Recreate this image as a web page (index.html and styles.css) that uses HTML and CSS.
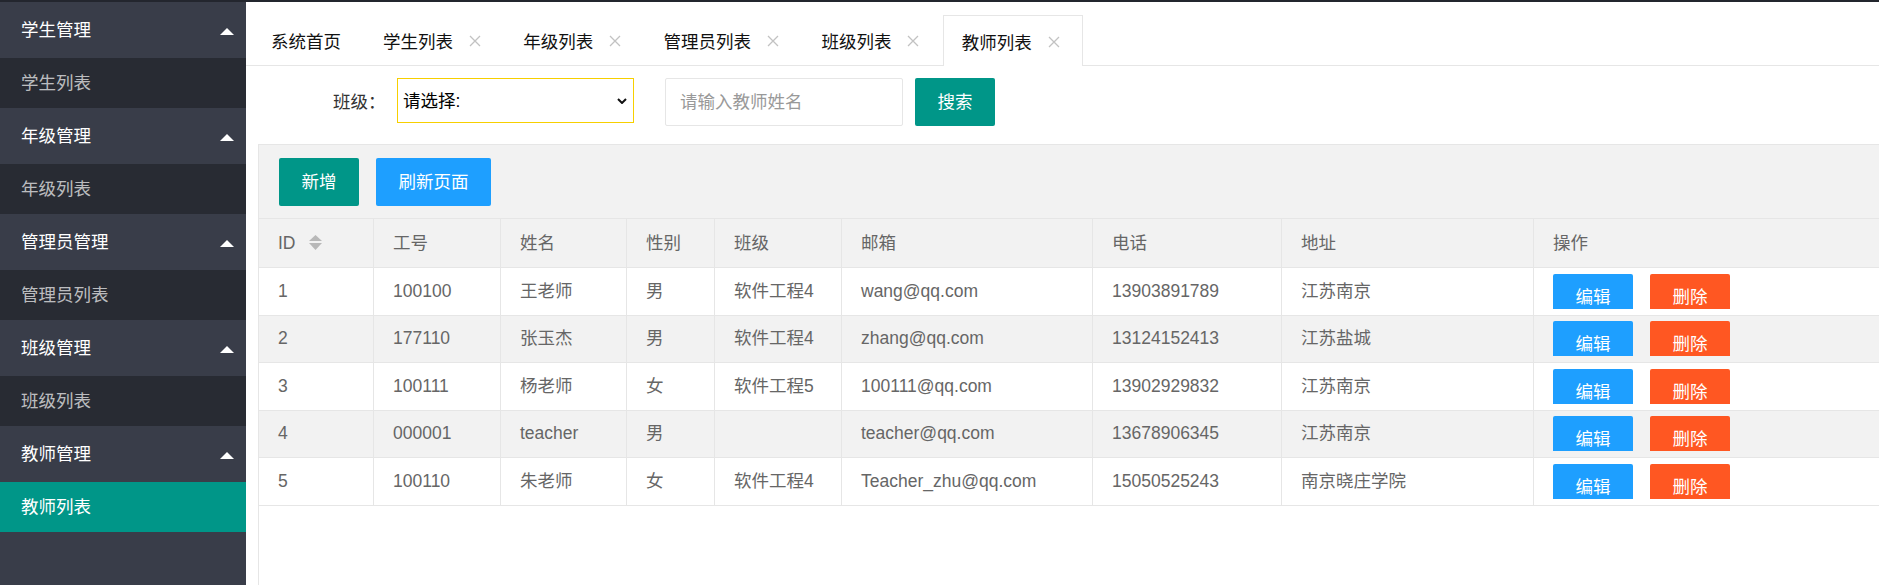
FILE: index.html
```html
<!DOCTYPE html>
<html lang="zh-CN">
<head>
<meta charset="utf-8">
<title>教师列表</title>
<link rel="stylesheet" href="styles.css">
</head>
<body>
<div class="topbar"></div>
<div class="layout">
  <aside class="sidebar">
    <div class="nav-title"><span>学生管理</span><i class="nav-arrow"></i></div>
    <div class="nav-child">学生列表</div>
    <div class="nav-title"><span>年级管理</span><i class="nav-arrow"></i></div>
    <div class="nav-child">年级列表</div>
    <div class="nav-title"><span>管理员管理</span><i class="nav-arrow"></i></div>
    <div class="nav-child">管理员列表</div>
    <div class="nav-title"><span>班级管理</span><i class="nav-arrow"></i></div>
    <div class="nav-child">班级列表</div>
    <div class="nav-title"><span>教师管理</span><i class="nav-arrow"></i></div>
    <div class="nav-child nav-active">教师列表</div>
  </aside>
  <main class="main">
    <div class="tabs">
      <ul class="tab-list">
        <li class="tab tab-home">系统首页</li>
        <li class="tab">学生列表<svg class="tab-close" width="12" height="12" viewBox="0 0 12 12"><path d="M1 1L11 11M11 1L1 11"/></svg></li>
        <li class="tab">年级列表<svg class="tab-close" width="12" height="12" viewBox="0 0 12 12"><path d="M1 1L11 11M11 1L1 11"/></svg></li>
        <li class="tab">管理员列表<svg class="tab-close" width="12" height="12" viewBox="0 0 12 12"><path d="M1 1L11 11M11 1L1 11"/></svg></li>
        <li class="tab">班级列表<svg class="tab-close" width="12" height="12" viewBox="0 0 12 12"><path d="M1 1L11 11M11 1L1 11"/></svg></li>
        <li class="tab tab-active">教师列表<svg class="tab-close" width="12" height="12" viewBox="0 0 12 12"><path d="M1 1L11 11M11 1L1 11"/></svg></li>
      </ul>
    </div>
    <form class="filter">
      <label class="filter-label">班级<span class="colon">：</span></label>
      <div class="select-wrap">
        <select class="select"><option>请选择:</option></select>
        <svg class="select-chevron" width="10" height="6" viewBox="0 0 10 6"><path d="M1 1L5 5L9 1"/></svg>
      </div>
      <input class="text-input" type="text" placeholder="请输入教师姓名">
      <button type="button" class="btn btn-green btn-search">搜索</button>
    </form>
    <section class="card">
      <div class="toolbar">
        <button type="button" class="btn btn-green">新增</button>
        <button type="button" class="btn btn-blue">刷新页面</button>
      </div>
      <div class="grid">
        <div class="tr thead">
          <div class="td">ID<svg class="sort" width="13" height="16" viewBox="0 0 13 16"><path d="M6.5 0L13 6H0Z"/><path d="M0 8H13L6.5 15Z"/></svg></div>
          <div class="td">工号</div>
          <div class="td">姓名</div>
          <div class="td">性别</div>
          <div class="td">班级</div>
          <div class="td">邮箱</div>
          <div class="td">电话</div>
          <div class="td">地址</div>
          <div class="td">操作</div>
        </div>
        <div class="tr">
          <div class="td">1</div><div class="td">100100</div><div class="td">王老师</div><div class="td">男</div><div class="td">软件工程4</div><div class="td">wang@qq.com</div><div class="td">13903891789</div><div class="td">江苏南京</div>
          <div class="td"><div class="ops"><button type="button" class="op op-edit">编辑</button><button type="button" class="op op-del">删除</button></div></div>
        </div>
        <div class="tr even">
          <div class="td">2</div><div class="td">177110</div><div class="td">张玉杰</div><div class="td">男</div><div class="td">软件工程4</div><div class="td">zhang@qq.com</div><div class="td">13124152413</div><div class="td">江苏盐城</div>
          <div class="td"><div class="ops"><button type="button" class="op op-edit">编辑</button><button type="button" class="op op-del">删除</button></div></div>
        </div>
        <div class="tr">
          <div class="td">3</div><div class="td">100111</div><div class="td">杨老师</div><div class="td">女</div><div class="td">软件工程5</div><div class="td">100111@qq.com</div><div class="td">13902929832</div><div class="td">江苏南京</div>
          <div class="td"><div class="ops"><button type="button" class="op op-edit">编辑</button><button type="button" class="op op-del">删除</button></div></div>
        </div>
        <div class="tr even">
          <div class="td">4</div><div class="td">000001</div><div class="td">teacher</div><div class="td">男</div><div class="td"></div><div class="td">teacher@qq.com</div><div class="td">13678906345</div><div class="td">江苏南京</div>
          <div class="td"><div class="ops"><button type="button" class="op op-edit">编辑</button><button type="button" class="op op-del">删除</button></div></div>
        </div>
        <div class="tr">
          <div class="td">5</div><div class="td">100110</div><div class="td">朱老师</div><div class="td">女</div><div class="td">软件工程4</div><div class="td">Teacher_zhu@qq.com</div><div class="td">15050525243</div><div class="td">南京晓庄学院</div>
          <div class="td"><div class="ops"><button type="button" class="op op-edit">编辑</button><button type="button" class="op op-del">删除</button></div></div>
        </div>
      </div>
    </section>
  </main>
</div>
</body>
</html>
```
FILE: styles.css
```css
* { box-sizing: border-box; }
html, body {
  margin: 0;
  padding: 0;
  width: 1879px;
  height: 585px;
  overflow: hidden;
  background: #fff;
  font-family: "Liberation Sans", "Noto Sans CJK SC", sans-serif;
  font-size: 17.5px;
  color: #333;
}
.topbar { height: 2px; background: #23262e; }
.layout { display: flex; height: 583px; }

/* sidebar */
.sidebar { width: 246px; flex: 0 0 246px; background: #393d49; }
.nav-title {
  height: 56px;
  display: flex;
  align-items: center;
  justify-content: space-between;
  padding: 0 12px 0 21px;
  color: #fff;
  line-height: 56px;
}
.nav-arrow {
  width: 0; height: 0;
  border-left: 7.5px solid transparent;
  border-right: 7.5px solid transparent;
  border-bottom: 7px solid #fff;
  margin-top: 2px;
}
.nav-child {
  height: 50px;
  line-height: 50px;
  padding-left: 21px;
  background: #282b33;
  color: rgba(255,255,255,.7);
}
.nav-active { background: #009688; color: #fff; }

/* main */
.main {
  flex: 1;
  min-width: 0;
  overflow: hidden;
  display: flex;
  flex-direction: column;
}
.tabs {
  border-bottom: 1px solid #e6e6e6;
  padding: 13px 0 0 6px;
}
.tab-list {
  list-style: none;
  margin: 0;
  padding: 0;
  display: flex;
  align-items: flex-start;
}
.tab {
  height: 50px;
  display: flex;
  align-items: center;
  padding: 0 23.3px 0 19px;
  color: #111;
  white-space: nowrap;
}
.tab-home { padding-right: 23px; }
.tab-active {
  height: 51px;
  margin-bottom: -1px;
  background: #fff;
  border: 1px solid #e6e6e6;
  border-bottom: none;
  padding-left: 18px;
  padding-right: 22.3px;
}
.tab-close {
  margin-left: 16px;
  margin-top: 1px;
  fill: none;
  stroke: #c2c2c2;
  stroke-width: 1.3;
}

/* filter */
.filter {
  display: flex;
  align-items: flex-start;
  margin: 0;
  padding: 12px 0 0 87px;
  height: 78px;
}
.filter-label {
  line-height: 48px;
  color: #333;
  margin-right: 11.5px;
  white-space: nowrap;
}
.colon {
  display: inline-block;
  width: 17.5px;
  text-align: center;
  font-family: "Liberation Sans", sans-serif;
}
.select-wrap { position: relative; width: 237px; height: 45px; }
.select {
  -webkit-appearance: none;
  appearance: none;
  width: 100%;
  height: 100%;
  border: 1px solid #f7cf00;
  border-radius: 0;
  background: #fff;
  padding: 0 0 0 5px;
  font-family: "Liberation Sans", "Noto Sans CJK SC", sans-serif;
  font-size: 17.5px;
  color: #000;
  outline: none;
}
.select-chevron {
  position: absolute;
  right: 7px;
  top: 20px;
  fill: none;
  stroke: #111;
  stroke-width: 2;
}
.text-input {
  width: 238px;
  height: 48px;
  margin-left: 31px;
  border: 1px solid #e6e6e6;
  border-radius: 2px;
  padding: 0 14px;
  font-family: "Liberation Sans", "Noto Sans CJK SC", sans-serif;
  font-size: 17.5px;
  color: #333;
  outline: none;
}
.text-input::placeholder { color: #999; }
.btn {
  height: 48px;
  padding: 0 22.5px;
  border: none;
  border-radius: 2px;
  color: #fff;
  font-family: "Liberation Sans", "Noto Sans CJK SC", sans-serif;
  font-size: 17.5px;
  line-height: 48px;
  white-space: nowrap;
}
.btn-green { background: #009688; }
.btn-blue { background: #1e9fff; }
.btn-search { margin-left: 12px; width: 80px; padding: 0; }

/* card / table */
.card {
  flex: 1;
  align-self: flex-start;
  width: 1660px;
  margin-left: 12px;
  border: 1px solid #e6e6e6;
  border-bottom: none;
  background: #fff;
}
.toolbar {
  display: flex;
  gap: 17px;
  padding: 13px 20px 12px;
  background: #f2f2f2;
  border-bottom: 1px solid #e6e6e6;
}
.grid {
  display: grid;
  grid-template-columns: 114px 127px 126px 88px 127px 251px 189px 252px 385px;
}
.tr { display: contents; }
.td {
  height: 47.5px;
  padding: 5.75px 19px;
  line-height: 35px;
  color: #666;
  border-bottom: 1px solid #e6e6e6;
  border-left: 1px solid #e6e6e6;
  white-space: nowrap;
  overflow: hidden;
  background: #fff;
}
.tr .td:first-child { border-left: none; }
.thead .td {
  height: 49px;
  padding: 0 19px;
  line-height: 48px;
  background: #f2f2f2;
  display: flex;
  align-items: center;
}
.even .td { background: #f2f2f2; }
.sort { margin-left: 13px; fill: #b8b8b8; }
.ops {
  height: 35px;
  overflow: hidden;
  display: flex;
  align-items: flex-start;
}
.op {
  width: 80px;
  height: 47.5px;
  flex: 0 0 80px;
  border: none;
  border-radius: 2px;
  padding: 0;
  color: #fff;
  font-family: "Liberation Sans", "Noto Sans CJK SC", sans-serif;
  font-size: 17.5px;
  line-height: 47.5px;
}
.op-edit { background: #1e9fff; }
.op-del { background: #ff5722; margin-left: 17px; }
```
